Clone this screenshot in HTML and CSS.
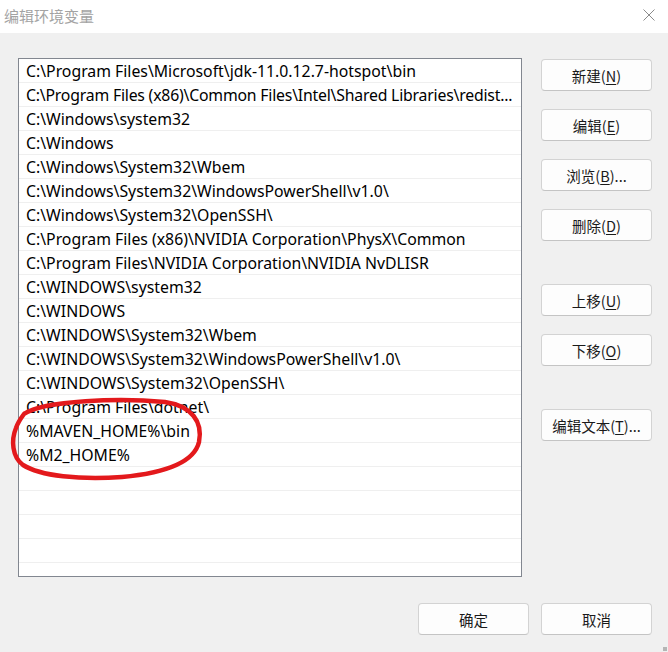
FILE: index.html
```html
<!DOCTYPE html>
<html lang="zh-CN">
<head>
    <meta charset="UTF-8">
    <meta name="viewport" content="width=device-width, initial-scale=1.0">
    <title>编辑环境变量</title>
    <link rel="stylesheet" href="styles.css">
</head>
<body>
    <div class="dialog">
        <div class="titlebar">
            <span class="title">编辑环境变量</span>
            <svg class="close" width="12" height="12" viewBox="0 0 12 12">
                <path d="M0.5 0.5 L11.5 11.5 M11.5 0.5 L0.5 11.5" stroke="#8a8a8a" stroke-width="1" fill="none"/>
            </svg>
        </div>

        <div class="content">
            <div class="path-list">
                <div class="row">C:\Program Files\Microsoft\jdk-11.0.12.7-hotspot\bin</div>
                <div class="row long">C:\Program Files (x86)\Common Files\Intel\Shared Libraries\redist...</div>
                <div class="row">C:\Windows\system32</div>
                <div class="row">C:\Windows</div>
                <div class="row">C:\Windows\System32\Wbem</div>
                <div class="row">C:\Windows\System32\WindowsPowerShell\v1.0\</div>
                <div class="row">C:\Windows\System32\OpenSSH\</div>
                <div class="row">C:\Program Files (x86)\NVIDIA Corporation\PhysX\Common</div>
                <div class="row">C:\Program Files\NVIDIA Corporation\NVIDIA NvDLISR</div>
                <div class="row">C:\WINDOWS\system32</div>
                <div class="row">C:\WINDOWS</div>
                <div class="row">C:\WINDOWS\System32\Wbem</div>
                <div class="row">C:\WINDOWS\System32\WindowsPowerShell\v1.0\</div>
                <div class="row">C:\WINDOWS\System32\OpenSSH\</div>
                <div class="row">C:\Program Files\dotnet\</div>
                <div class="row">%MAVEN_HOME%\bin</div>
                <div class="row">%M2_HOME%</div>
                <div class="row"></div>
                <div class="row"></div>
                <div class="row"></div>
                <div class="row"></div>
                <div class="row"></div>
                <div class="row"></div>
            </div>

            <div class="side">
                <button class="btn">新建(<u>N</u>)</button>
                <button class="btn">编辑(<u>E</u>)</button>
                <button class="btn">浏览(<u>B</u>)...</button>
                <button class="btn">删除(<u>D</u>)</button>
                <button class="btn group">上移(<u>U</u>)</button>
                <button class="btn">下移(<u>O</u>)</button>
                <button class="btn group">编辑文本(<u>T</u>)...</button>
            </div>
        </div>

        <div class="footer">
            <button class="btn">确定</button>
            <button class="btn">取消</button>
        </div>

        <span class="grip"></span>

        <svg class="marker" width="668" height="652" viewBox="0 0 668 652">
            <path d="M24 414 C 45 400, 120 398, 165 402 C 192 406, 203 422, 199 442 C 194 463, 165 473, 122 477 C 80 480, 40 476, 23 465 C 12 457, 11 440, 16 428 C 18 422, 21 418, 24 414"
                  stroke="#e3191c" stroke-width="4.5" fill="none" stroke-linecap="round"/>
        </svg>
    </div>
</body>
</html>
```

FILE: styles.css
```css
body {
    margin: 0;
    font-family: "Noto Sans", "Noto Sans CJK SC", sans-serif;
    background-color: #f0f0f0;
}
.dialog {
    position: relative;
    width: 668px;
    height: 652px;
    overflow: hidden;
}
.titlebar {
    height: 33px;
    background-color: #fff;
    display: flex;
    align-items: center;
    justify-content: space-between;
    padding: 0 13px 0 4px;
}
.titlebar .title {
    font-family: "Noto Sans CJK SC", sans-serif;
    font-size: 15px;
    color: #a3a3a3;
    margin-top: -2px;
}
.titlebar .close {
    margin-top: -4px;
}
.content {
    display: flex;
    padding: 25px 16px 0 18px;
    gap: 19px;
}
.path-list {
    width: 502px;
    height: 517px;
    border: 1px solid #828790;
    background-color: #fff;
    overflow: hidden;
}
.path-list .row {
    height: 23px;
    line-height: 25px;
    border-bottom: 1px solid #efefef;
    padding: 0 3px 0 7px;
    font-size: 15.8px;
    color: #000;
    white-space: nowrap;
    overflow: hidden;
    text-overflow: ellipsis;
}
.path-list .row.long {
    letter-spacing: -0.2px;
}
.side {
    display: flex;
    flex-direction: column;
    gap: 18px;
    padding-top: 1px;
}
.side .group {
    margin-top: 25px;
}
.btn {
    width: 111px;
    height: 32px;
    background-color: #fdfdfd;
    border: 1px solid #d3d3d3;
    border-bottom-color: #c4c4c4;
    border-radius: 4px;
    font-family: "Noto Sans CJK SC", sans-serif;
    font-size: 14.5px;
    color: #1a1a1a;
    padding: 0;
}
.btn u {
    text-underline-offset: 2px;
}
.footer {
    display: flex;
    justify-content: flex-end;
    gap: 12px;
    padding: 26px 16px 0 0;
}
.grip {
    position: absolute;
    right: 1px;
    bottom: 1px;
    width: 4px;
    height: 4px;
    background: radial-gradient(circle, #b5b5b5 1px, transparent 1px) 0 0 / 2px 2px;
}
.marker {
    position: absolute;
    left: 0;
    top: 0;
    pointer-events: none;
}
```
